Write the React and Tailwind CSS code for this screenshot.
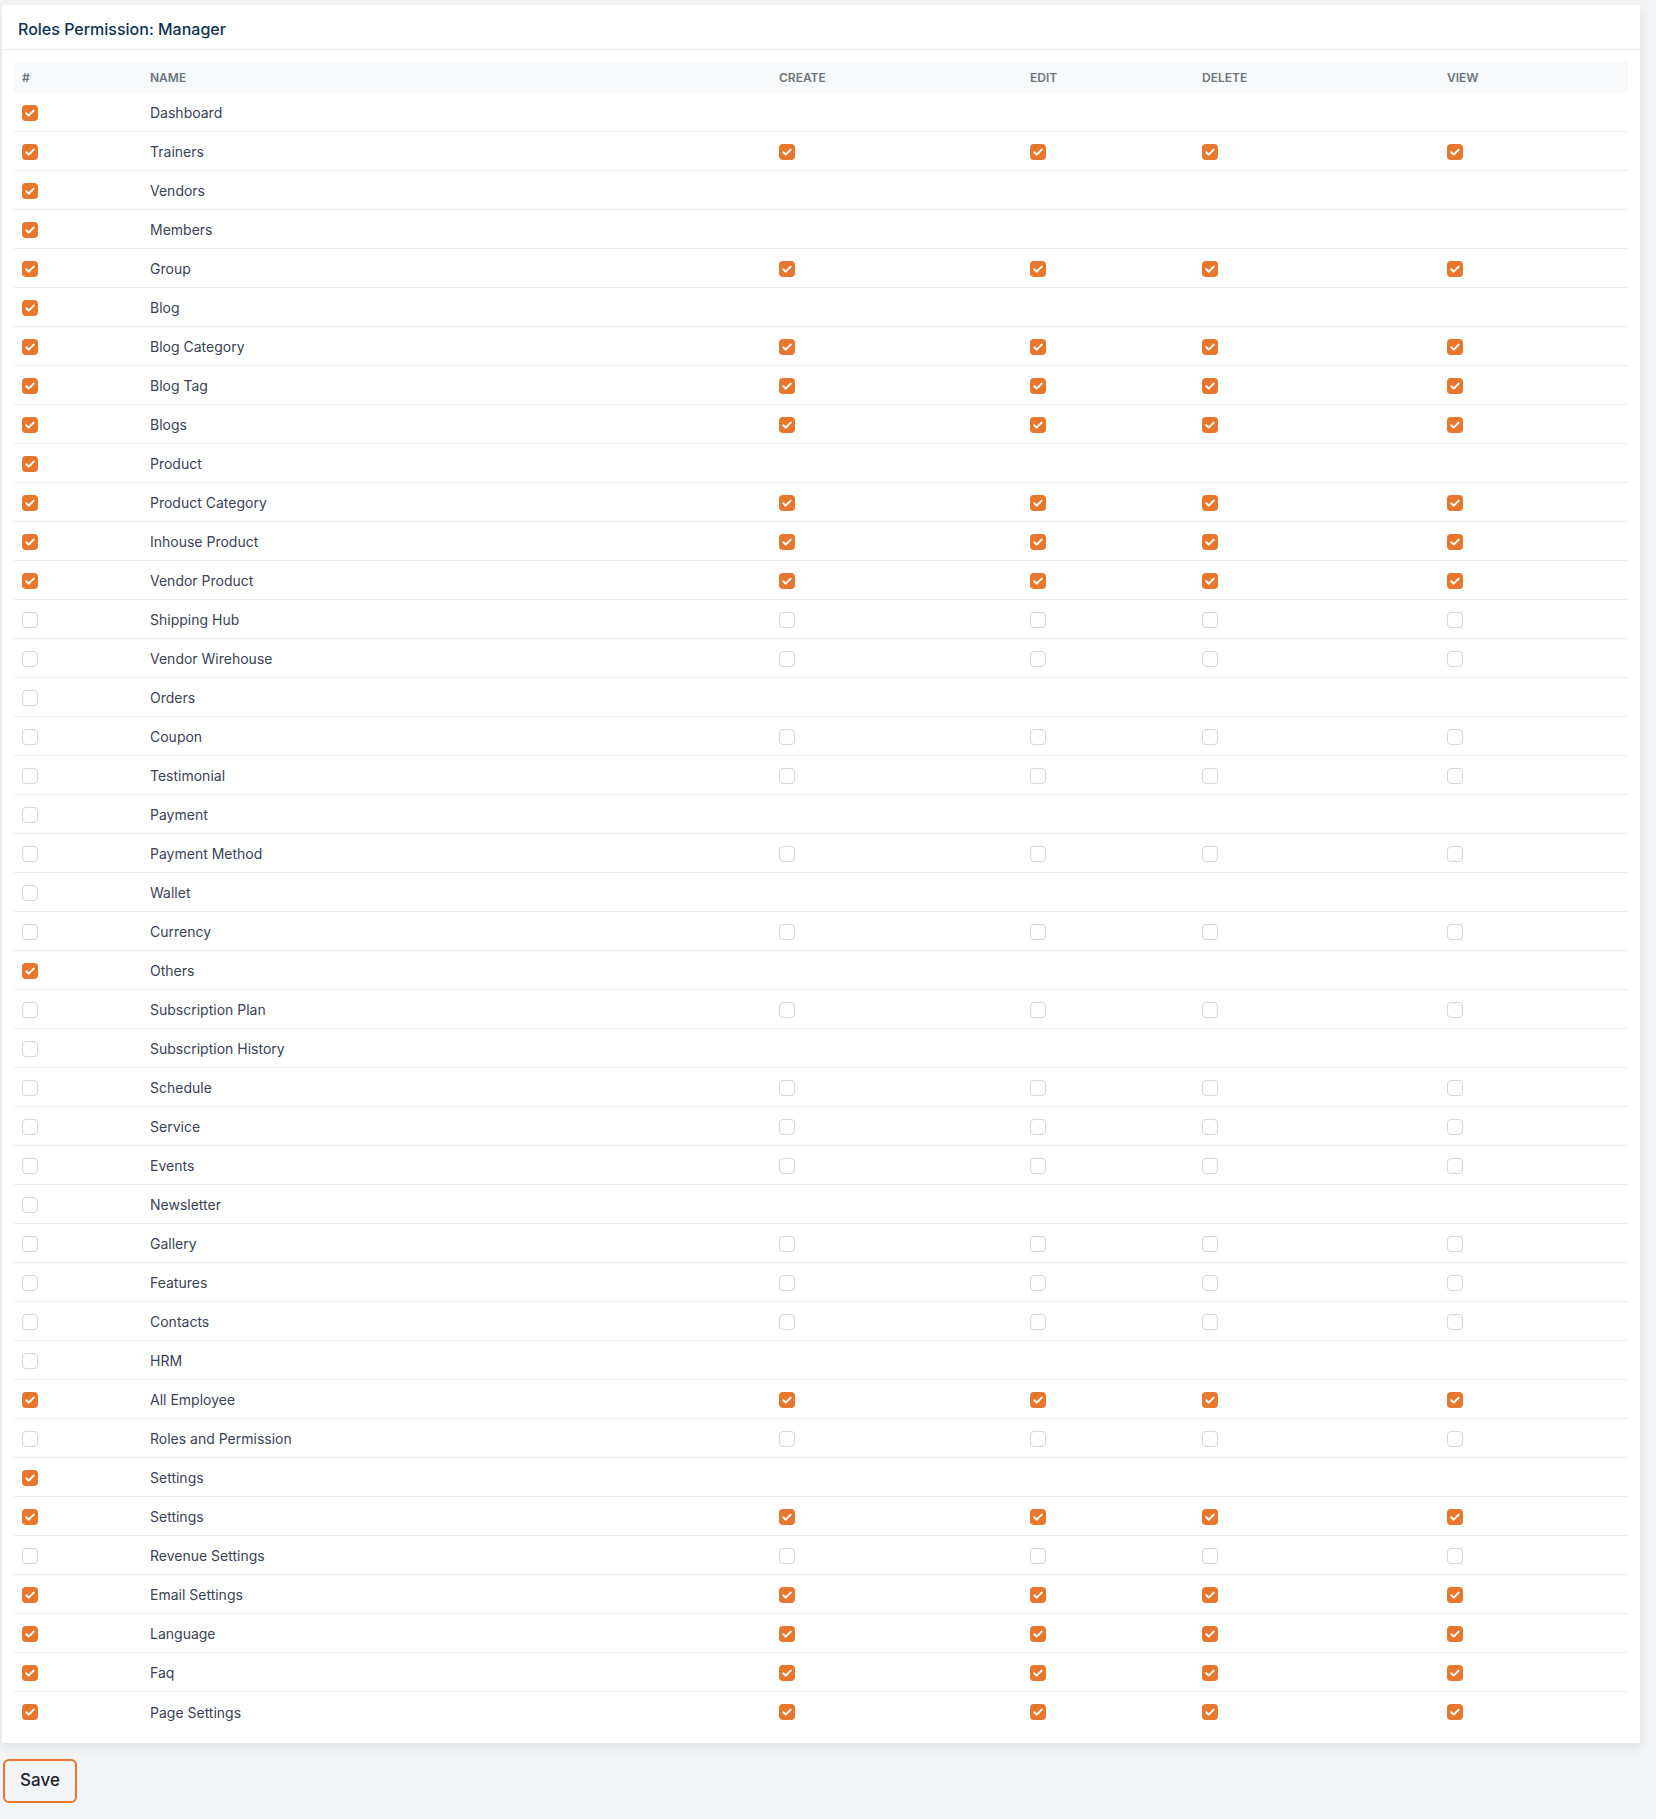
import { memo } from 'react';

// filas del rol: [nombre, marcado, tieneAcciones]
const rows = [
  ['Dashboard', true, false],
  ['Trainers', true, true],
  ['Vendors', true, false],
  ['Members', true, false],
  ['Group', true, true],
  ['Blog', true, false],
  ['Blog Category', true, true],
  ['Blog Tag', true, true],
  ['Blogs', true, true],
  ['Product', true, false],
  ['Product Category', true, true],
  ['Inhouse Product', true, true],
  ['Vendor Product', true, true],
  ['Shipping Hub', false, true],
  ['Vendor Wirehouse', false, true],
  ['Orders', false, false],
  ['Coupon', false, true],
  ['Testimonial', false, true],
  ['Payment', false, false],
  ['Payment Method', false, true],
  ['Wallet', false, false],
  ['Currency', false, true],
  ['Others', true, false],
  ['Subscription Plan', false, true],
  ['Subscription History', false, false],
  ['Schedule', false, true],
  ['Service', false, true],
  ['Events', false, true],
  ['Newsletter', false, false],
  ['Gallery', false, true],
  ['Features', false, true],
  ['Contacts', false, true],
  ['HRM', false, false],
  ['All Employee', true, true],
  ['Roles and Permission', false, true],
  ['Settings', true, false],
  ['Settings', true, true],
  ['Revenue Settings', false, true],
  ['Email Settings', true, true],
  ['Language', true, true],
  ['Faq', true, true],
  ['Page Settings', true, true],
];

const cols = 'grid grid-cols-[128px_629px_251px_172px_245px_189px] items-center';

function Check({ checked }) {
  if (!checked) {
    return <span className="mt-px block size-4 rounded-[4px] border border-[#d6d6d6] bg-white" />;
  }
  return (
    <span className="mt-px flex size-4 items-center justify-center rounded-[4px] bg-[#e8772e]">
      <svg viewBox="0 0 16 16" className="size-4" fill="none">
        <path d="M4.3 8.2l2.4 2.4 5-5" stroke="#fff" strokeWidth="2" strokeLinecap="round" strokeLinejoin="round" />
      </svg>
    </span>
  );
}

function App() {
  return (
    <div className="min-h-screen bg-[#f2f3f5] pt-[5px] pl-[2px] pb-4 font-['Inter',sans-serif]">
      <div className="w-[1638px] rounded-[3px] bg-white shadow-[0_4px_12px_rgba(0,0,0,0.08)]">
        <div className="flex h-[45px] items-center border-b border-[#eeeeee] px-4 pt-[4px]">
          <h2 className="text-[16px] font-medium text-[#0b3354]">Roles Permission: Manager</h2>
        </div>

        <div className="p-3">
          <div className={`${cols} h-[31px] bg-[#f8f9fa] text-[12px] font-semibold uppercase text-[#6c757d]`}>
            <div className="px-2">#</div>
            <div className="px-2">Name</div>
            <div className="px-2">Create</div>
            <div className="px-2">Edit</div>
            <div className="px-2">Delete</div>
            <div className="px-2">View</div>
          </div>

          {rows.map(([name, checked, hasActions], i) => (
            <div
              key={i}
              className={`${cols} h-[39px] text-[14px] text-[#3b4256] ${i < rows.length - 1 ? 'border-b border-[#eeeeee]' : ''}`}
            >
              <div className="px-2"><Check checked={checked} /></div>
              <div className="px-2 pt-px">{name}</div>
              {[0, 1, 2, 3].map((c) => (
                <div key={c} className="px-2">
                  {hasActions && <Check checked={checked} />}
                </div>
              ))}
            </div>
          ))}
        </div>
      </div>

      <button className="mt-4 ml-px flex h-[44px] w-[74px] items-center justify-center rounded-md border-2 border-[#e8772e] text-[17px] font-medium text-[#1f2430]">
        Save
      </button>
    </div>
  );
}

export default memo(App);
